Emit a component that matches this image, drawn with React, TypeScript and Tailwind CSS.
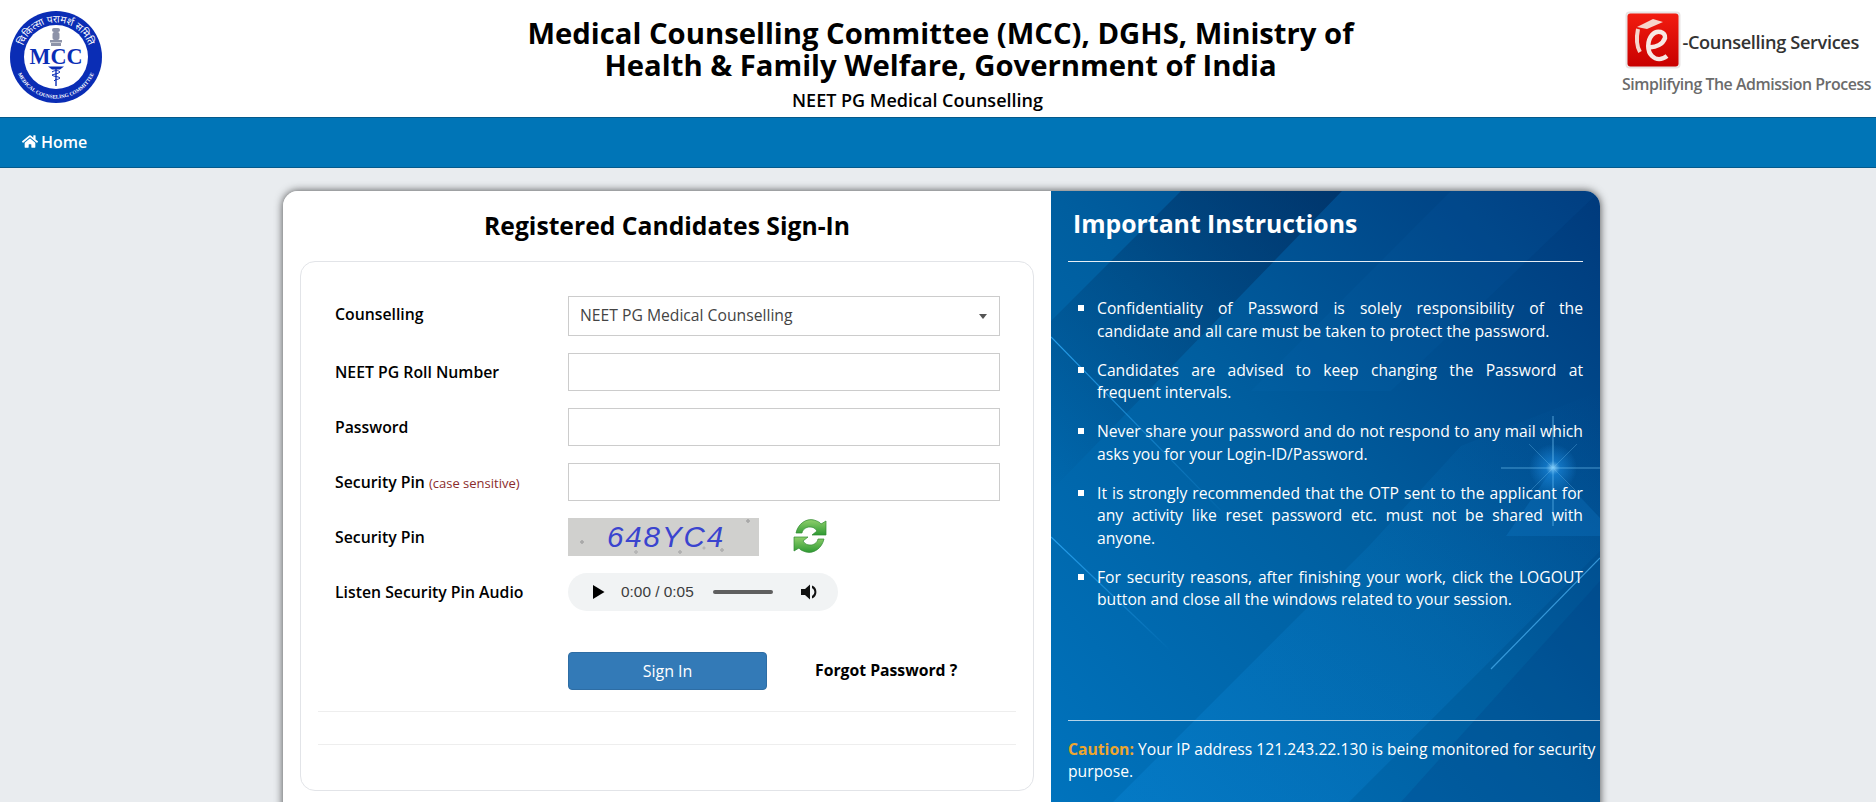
import { FaHome } from "react-icons/fa";

const font = { fontFamily: '"Open Sans", sans-serif' };

function McCLogo() {
  return (
    <svg width="92" height="92" viewBox="0 0 92 92" className="shrink-0">
      <defs>
        <path id="top" d="M 11.5 46 A 34.5 34.5 0 0 1 80.5 46" />
        <path id="bot" d="M 4.5 46 A 41.5 41.5 0 0 0 87.5 46" />
      </defs>
      <circle cx="46" cy="46" r="46" fill="#0a2db5" />
      <circle cx="46" cy="46" r="32" fill="#fff" />
      <text fontSize="10" fill="#fff" fontFamily='"Noto Sans", sans-serif'>
        <textPath href="#top" startOffset="50%" textAnchor="middle">चिकित्सा परामर्श समिति</textPath>
      </text>
      <text fontSize="5.2" fill="#fff" fontWeight="700" fontFamily='"Liberation Serif", serif'>
        <textPath href="#bot" startOffset="50%" textAnchor="middle">MEDICAL COUNSELING COMMITTEE</textPath>
      </text>
      <g fill="#8d93a8">
        <rect x="42" y="17" width="8" height="4" rx="2" />
        <rect x="42.5" y="21" width="7" height="8" rx="2" />
        <rect x="40" y="29" width="12" height="2.5" />
        <rect x="41" y="32" width="10" height="3" />
      </g>
      <text x="46" y="53" textAnchor="middle" fontSize="23" fontWeight="700" fill="#0a2db5" fontFamily='"Liberation Serif", serif' textLength="53" lengthAdjust="spacingAndGlyphs">MCC</text>
      <g stroke="#0a2db5" fill="none" strokeWidth="1">
        <path d="M46 56V75" strokeWidth="1.4" />
        <path d="M42 61c3-2 6-2 8 0c-2 2-6 2-8 3c2 2 6 1 8 3c-2 2-5 1-6 3" />
      </g>
      <path d="M38 55.500h16l-4 3h-8z" fill="#0a2db5" />
    </svg>
  );
}

function ELogo() {
  return (
    <svg width="56" height="58" viewBox="0 0 56 58" className="shrink-0">
      <defs>
        <linearGradient id="red" x1="0" y1="0" x2="0" y2="1">
          <stop offset="0" stopColor="#f21c10" />
          <stop offset="1" stopColor="#c80000" />
        </linearGradient>
      </defs>
      <rect x="0.5" y="0.5" width="55" height="57" rx="4" fill="#e8e4e4" />
      <rect x="2.5" y="2.5" width="51" height="53" rx="3" fill="url(#red)" />
      <path d="M12 16L28 8L38 11L22 18z" fill="#f6d6cc" />
      <path d="M13 18C11 28 12 36 15 41" stroke="#f6d6cc" strokeWidth="4" fill="none" />
      <path d="M23 36c8 1 15-3 17-9c1-6-8-9-13-3c-5 6-5 16 0 21c4 4 10 4 15 0" stroke="#f8e8e4" strokeWidth="4.5" fill="none" />
    </svg>
  );
}

function Refresh() {
  return (
    <svg width="36" height="36" viewBox="0 0 36 36">
      <defs>
        <linearGradient id="g" x1="0" y1="0" x2="0" y2="1">
          <stop offset="0" stopColor="#8fcf6b" />
          <stop offset="1" stopColor="#2f9a33" />
        </linearGradient>
      </defs>
      <path d="M4 15C6 6 14 0 22 2c3 1 6 2 7 4l5-3v14H20l5-4c-2-3-4-4-7-4c-4 0-7 2-8 6z" fill="url(#g)" stroke="#2f8a32" strokeWidth="0.7" />
      <path d="M32 21c-2 9-10 15-18 13c-3-1-6-2-7-4l-5 3V19h14l-5 4c2 3 4 4 7 4c4 0 7-2 8-6z" fill="url(#g)" stroke="#2f8a32" strokeWidth="0.7" />
    </svg>
  );
}

function Backdrop() {
  return (
    <svg className="absolute inset-0" width="549" height="611" viewBox="0 0 549 611" preserveAspectRatio="none">
      <defs>
        <linearGradient id="base" x1="0" y1="1" x2="1" y2="0">
          <stop offset="0" stopColor="#0073bd" />
          <stop offset="0.5" stopColor="#005e9f" />
          <stop offset="1" stopColor="#003a7c" />
        </linearGradient>
        <linearGradient id="band" x1="0" y1="1" x2="1" y2="0">
          <stop offset="0" stopColor="#0a86d6" stopOpacity="0.4" />
          <stop offset="1" stopColor="#0a86d6" stopOpacity="0" />
        </linearGradient>
        <linearGradient id="dark" x1="1" y1="0" x2="0" y2="1">
          <stop offset="0" stopColor="#00214d" stopOpacity="0.5" />
          <stop offset="1" stopColor="#00214d" stopOpacity="0" />
        </linearGradient>
        <radialGradient id="glow">
          <stop offset="0" stopColor="#9fdcff" stopOpacity="0.95" />
          <stop offset="0.3" stopColor="#1e90e8" stopOpacity="0.55" />
          <stop offset="1" stopColor="#1e90e8" stopOpacity="0" />
        </radialGradient>
        <linearGradient id="line" x1="0" y1="0" x2="1" y2="1">
          <stop offset="0" stopColor="#2aa3f0" stopOpacity="0.95" />
          <stop offset="1" stopColor="#2aa3f0" stopOpacity="0" />
        </linearGradient>
      </defs>
      <rect width="549" height="611" fill="url(#base)" />
      <polygon points="291,0 130,0 0,130 0,300" fill="url(#dark)" />
      <polygon points="549,200 549,360 298,611 62,611 318,355 410,255" fill="url(#band)" />
      <polygon points="549,390 549,611 350,611" fill="#003d7f" opacity="0.22" />
      <polygon points="549,0 400,0 200,200 340,200" fill="#0a86d6" opacity="0.06" />
      <path d="M0 146 L180 330" stroke="url(#line)" strokeWidth="1.2" />
      <path d="M0 346 L120 460" stroke="url(#line)" strokeWidth="1.2" />
      <path d="M549 367 L440 478" stroke="#4db4f5" strokeWidth="1.2" opacity="0.7" />
      <circle cx="502" cy="277" r="24" fill="url(#glow)" />
      <g stroke="#7fd0ff" strokeWidth="0.8">
        <path d="M502 225V335" opacity="0.8" />
        <path d="M450 277H549" opacity="0.7" />
        <path d="M478 253L526 301" opacity="0.35" />
        <path d="M526 253L478 301" opacity="0.35" />
      </g>
      <polygon points="502,277 549,327 549,345 455,345" fill="#1a8de0" opacity="0.2" />
    </svg>
  );
}

const rows = ["NEET PG Roll Number", "Password"];

const items = [
  "Candidates are advised to keep changing the Password at frequent intervals.",
  "Never share your password and do not respond to any mail which asks you for your Login-ID/Password.",
  "It is strongly recommended that the OTP sent to the applicant for any activity like reset password etc. must not be shared with anyone.",
  "For security reasons, after finishing your work, click the LOGOUT button and close all the windows related to your session.",
];

export default function App() {
  return (
    <div className="h-[802px] overflow-hidden bg-[#e9ecef] text-black" style={font}>
      <header className="flex h-[117px] items-start justify-between bg-white">
        <div className="w-[405px] pl-[10px] pt-[11px]">
          <McCLogo />
        </div>
        <div className="flex-1 pt-[17px] text-center">
          <h1 className="text-[29.25px] font-bold leading-[32px]">
            Medical Counselling Committee (MCC), DGHS, Ministry of
            <br />
            Health &amp; Family Welfare, Government of India
          </h1>
          <p className="mr-[46px] mt-[7px] text-[18px] font-semibold leading-[24px]">NEET PG Medical Counselling</p>
        </div>
        <div className="flex w-[400px] flex-col items-end pr-[5px] pt-[11px]">
          <div className="flex items-center pr-[12px]">
            <ELogo />
            <span className="ml-px mt-[4px] text-[18.2px] font-semibold leading-none tracking-[-0.35px] text-[#333]">-Counselling Services</span>
          </div>
          <span className="mt-[6px] text-[15.9px] font-semibold leading-[18px] tracking-[-0.45px] text-[#6b6b6b]">Simplifying The Admission Process</span>
        </div>
      </header>

      <nav className="flex h-[51px] items-center border-y border-[#045a8c] bg-[#0075b7] pb-[2px] pl-[22px] text-white">
        <FaHome className="mr-[3px] h-[15px] w-[16px]" />
        <span className="text-[16px] font-semibold">Home</span>
      </nav>

      <main className="ml-[283px] mt-[23px] flex h-[640px] w-[1317px] overflow-hidden rounded-[15px] shadow-[0_0_9px_rgba(0,0,0,0.7)]">
        <section className="w-[768px] bg-white px-[17px]">
          <h2 className="pt-[19px] text-center text-[24.7px] font-bold leading-[32px]">Registered Candidates Sign-In</h2>
          <div className="mt-[19px] h-[530px] rounded-[15px] border border-[#e2e4e8] px-[17px] pt-[34px]">
            <div className="flex h-[40px] items-center pl-[17px]">
              <label className="w-[233px] -translate-y-[1px] text-[15.8px] font-semibold leading-none">Counselling</label>
              <div className="flex h-[40px] w-[432px] items-center justify-between border border-[#ccc] pl-[11px] pr-[12px] text-[15.7px] text-[#444]">
                <span>NEET PG Medical Counselling</span>
                <span className="h-0 w-0 border-x-[4px] border-t-[5px] border-x-transparent border-t-[#555]" />
              </div>
            </div>
            {rows.map((r) => (
              <div key={r} className="mt-[17px] flex h-[38px] items-center pl-[17px]">
                <label className="w-[233px] pt-[2px] text-[15.8px] font-semibold leading-none">{r}</label>
                <input className="h-[38px] w-[432px] border border-[#ccc] bg-white outline-none" />
              </div>
            ))}
            <div className="mt-[17px] flex h-[38px] items-center pl-[17px]">
              <label className="w-[233px] pt-[2px] text-[15.8px] font-semibold leading-none">
                Security Pin <span className="text-[13px] font-normal text-[#8b2c2c]">(case sensitive)</span>
              </label>
              <input className="h-[38px] w-[432px] border border-[#ccc] bg-white outline-none" />
            </div>
            <div className="mt-[17px] flex h-[38px] items-center pl-[17px]">
              <label className="w-[233px] pt-[2px] text-[15.8px] font-semibold leading-none">Security Pin</label>
              <div className="flex h-[38px] w-[191px] items-center bg-[#d0d0ce] bg-[radial-gradient(circle_at_14px_24px,#a9a9a9_1.5px,transparent_2px),radial-gradient(circle_at_180px_3px,#a9a9a9_1.5px,transparent_2px),radial-gradient(circle_at_154px_32px,#b0b0b0_1.5px,transparent_2px),radial-gradient(circle_at_112px_34px,#b0b0b0_1.5px,transparent_2px),radial-gradient(circle_at_68px_34px,#b5b5b5_1.5px,transparent_2px),radial-gradient(circle_at_136px_30px,#b5b5b5_1px,transparent_2px)] pl-[39px]">
                <span className="text-[29.5px] italic leading-none tracking-[1.9px] text-[#3a44cf]" style={{ fontFamily: '"Liberation Sans", sans-serif' }}>648YC4</span>
              </div>
              <div className="ml-[33px] -mt-[3px]">
                <Refresh />
              </div>
            </div>
            <div className="mt-[17px] flex h-[38px] items-center pl-[17px]">
              <label className="w-[233px] pt-[2px] text-[15.8px] font-semibold leading-none">Listen Security Pin Audio</label>
              <div className="flex h-[38px] w-[270px] items-center rounded-full bg-[#f1f3f4] pl-[25px] text-[15.4px] text-[#3d3d3d]" style={{ fontFamily: '"Liberation Sans", sans-serif' }}>
                <svg width="12" height="14" viewBox="0 0 12 14" className="shrink-0"><path d="M0 0L11.5 7L0 14z" fill="#000" /></svg>
                <span className="ml-[16px] w-[92px]">0:00 / 0:05</span>
                <span className="h-[4px] w-[60px] rounded-full bg-[#5f5f5f]" />
                <svg width="18" height="18" viewBox="0 0 18 18" className="ml-[28px] shrink-0"><path d="M0 6H4L9 1.5V16.5L4 12H0z" fill="#111" /><path d="M11 2.5a7 7 0 0 1 0 13V13a4.5 4.5 0 0 0 0-8z" fill="#111" /></svg>
              </div>
            </div>
            <div className="mt-[41px] flex h-[38px] items-center pl-[250px]">
              <button className="h-[38px] w-[199px] rounded-[4px] border border-[#2e6da4] bg-[#337ab7] text-[16px] text-white">Sign In</button>
              <a className="ml-[48px] text-[15.75px] font-bold text-black">Forgot Password ?</a>
            </div>
            <hr className="mt-[21px] border-[#eee]" />
            <hr className="mt-[32px] border-[#eee]" />
          </div>
        </section>

        <section className="relative flex-1 overflow-hidden text-white">
          <Backdrop />
          <div className="relative pl-[17px]">
            <h2 className="pl-[5px] pt-[15px] text-[24.8px] font-bold leading-[34px]">Important Instructions</h2>
            <hr className="mr-[17px] mt-[21px] border-white/90" />
            <ul className="mr-[17px] mt-[35px] pl-[10px] text-[15.7px] leading-[22.5px]">
              <li className="mb-[16.5px] flex items-start">
                <span className="mr-[13px] mt-[8px] h-[6px] w-[6px] shrink-0 bg-white" />
                <p className="flex-1 text-justify">
                  <span className="block [text-align-last:justify]">Confidentiality of Password is solely responsibility of the</span>
                  <span className="block">candidate and all care must be taken to protect the password.</span>
                </p>
              </li>
              {items.map((t) => (
                <li key={t} className="mb-[16.5px] flex items-start">
                  <span className="mr-[13px] mt-[8px] h-[6px] w-[6px] shrink-0 bg-white" />
                  <p className="flex-1 text-justify">{t}</p>
                </li>
              ))}
            </ul>
            <hr className="mt-[109px] border-white/70" />
            <p className="mt-[17px] text-[15.7px] leading-[22.5px]">
              <b className="font-bold text-[#eea62e]">Caution:</b> Your IP address 121.243.22.130 is being monitored for security purpose.
            </p>
          </div>
        </section>
      </main>
    </div>
  );
}
